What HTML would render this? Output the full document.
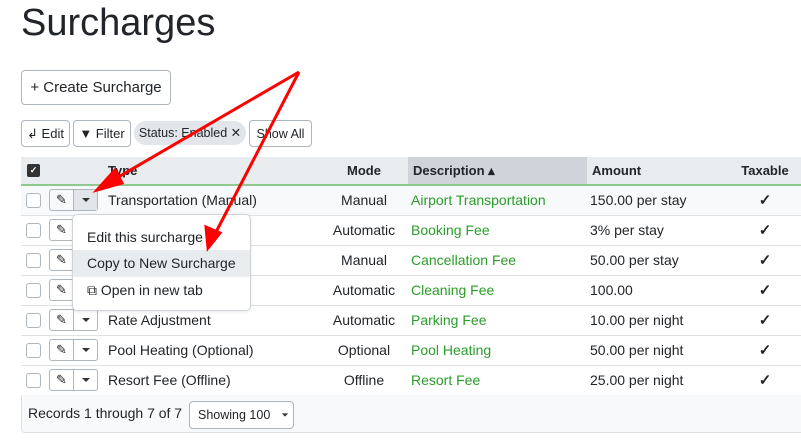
<!DOCTYPE html><html><head><style>
body{margin:0;width:801px;height:443px;overflow:hidden;background:#fff;font-family:"Liberation Sans",sans-serif;color:#212529;position:relative}
.a{position:absolute}
h1{position:absolute;left:21px;top:2px;margin:0;font-size:38px;font-weight:400}
.btn{position:absolute;border:1px solid #adb5bd;border-radius:4px;background:#fff;box-sizing:border-box;font-size:13px;display:flex;align-items:center;justify-content:center}
table{position:absolute;left:21px;top:157px;border-collapse:collapse;font-size:14px;table-layout:fixed;width:789px}
td,th{height:30px;padding:0;border-bottom:1px solid #dee2e6;box-sizing:border-box;white-space:nowrap}
th{background:#e9ecef;font-size:13px;text-align:left;height:28px;border-bottom:2px solid #8fc98f}
.cb{width:13px;height:13px;border:1px solid #adb5bd;border-radius:3px;margin-left:5px;background:#fff}
.g{color:#2a9d2a}
.bg{display:flex;margin-left:4px;width:49px;height:22px;border:1px solid #adb5bd;border-radius:3px;box-sizing:border-box}
.bg span{flex:1;display:flex;align-items:center;justify-content:center;font-size:13px;color:#222}
.bg span+span{border-left:1px solid #adb5bd}
.car{width:0;height:0;border-left:4px solid transparent;border-right:4px solid transparent;border-top:4px solid #333}
.ck{text-align:center;font-weight:bold;font-size:15px}
</style></head><body>
<h1>Surcharges</h1>
<div class="btn" style="left:21px;top:70px;width:150px;height:35px;font-size:15px">+ Create Surcharge</div>
<div class="btn" style="left:21px;top:120px;width:49px;height:27px">↲ Edit</div>
<div class="btn" style="left:73px;top:120px;width:58px;height:27px">▼ Filter</div>
<div class="a" style="left:134px;top:121px;width:112px;height:24px;background:#e2e6ea;border-radius:12px;font-size:12.5px;line-height:24px;text-align:center">Status: Enabled ✕</div>
<div class="btn" style="left:249px;top:120px;width:63px;height:27px;font-size:12.5px">Show All</div>
<table>
<colgroup><col style="width:24px"><col style="width:63px"><col style="width:212px"><col style="width:88px"><col style="width:179px"><col style="width:133px"><col style="width:90px"></colgroup>
<tr><th><div style="width:13px;height:13px;background:#333;border-radius:2px;margin-left:6px;color:#fff;font-size:9px;text-align:center;line-height:13px">✓</div></th><th></th><th>Type</th><th style="text-align:center">Mode</th><th style="background:#ced4da;padding-left:5px">Description ▴</th><th style="padding-left:5px">Amount</th><th style="text-align:center">Taxable</th></tr>
<tr style="background:#f8f9fa"><td><div class="cb"></div></td><td><div class="bg"><span>✎</span><span style="background:#e2e6ea"><i class="car"></i></span></div></td><td>Transportation (Manual)</td><td style="text-align:center">Manual</td><td class="g" style="padding-left:3px">Airport Transportation</td><td style="padding-left:3px">150.00 per stay</td><td class="ck">✓</td></tr>
<tr><td><div class="cb"></div></td><td><div class="bg"><span>✎</span><span><i class="car"></i></span></div></td><td>Booking Fee (Custom)</td><td style="text-align:center">Automatic</td><td class="g" style="padding-left:3px">Booking Fee</td><td style="padding-left:3px">3% per stay</td><td class="ck">✓</td></tr>
<tr><td><div class="cb"></div></td><td><div class="bg"><span>✎</span><span><i class="car"></i></span></div></td><td>Cancellation (Manual)</td><td style="text-align:center">Manual</td><td class="g" style="padding-left:3px">Cancellation Fee</td><td style="padding-left:3px">50.00 per stay</td><td class="ck">✓</td></tr>
<tr><td><div class="cb"></div></td><td><div class="bg"><span>✎</span><span><i class="car"></i></span></div></td><td>Cleaning</td><td style="text-align:center">Automatic</td><td class="g" style="padding-left:3px">Cleaning Fee</td><td style="padding-left:3px">100.00</td><td class="ck">✓</td></tr>
<tr><td><div class="cb"></div></td><td><div class="bg"><span>✎</span><span><i class="car"></i></span></div></td><td>Rate Adjustment</td><td style="text-align:center">Automatic</td><td class="g" style="padding-left:3px">Parking Fee</td><td style="padding-left:3px">10.00 per night</td><td class="ck">✓</td></tr>
<tr><td><div class="cb"></div></td><td><div class="bg"><span>✎</span><span><i class="car"></i></span></div></td><td>Pool Heating (Optional)</td><td style="text-align:center">Optional</td><td class="g" style="padding-left:3px">Pool Heating</td><td style="padding-left:3px">50.00 per night</td><td class="ck">✓</td></tr>
<tr><td><div class="cb"></div></td><td><div class="bg"><span>✎</span><span><i class="car"></i></span></div></td><td>Resort Fee (Offline)</td><td style="text-align:center">Offline</td><td class="g" style="padding-left:3px">Resort Fee</td><td style="padding-left:3px">25.00 per night</td><td class="ck">✓</td></tr>
</table>
<div class="a" style="left:21px;top:395px;width:790px;height:38px;background:#f8f9fa;border:1px solid #dee2e6;border-top:none;border-radius:0 0 4px 4px;box-sizing:border-box"></div>
<div class="a" style="left:28px;top:405px;font-size:14px">Records 1 through 7 of 7</div>
<div class="btn" style="left:189px;top:401px;width:105px;height:28px;font-size:12.5px;justify-content:flex-start;padding-left:8px">Showing 100 &nbsp;&nbsp;<i class="car" style="transform:scale(.8)"></i></div>
<div class="a" style="left:72px;top:214px;width:177px;height:95px;background:#fff;border:1px solid #ced4da;border-radius:5px;font-size:14px;box-shadow:0 1px 3px rgba(0,0,0,.1)">
<div style="padding:14px 0 0 14px;height:21px">Edit this surcharge</div>
<div style="background:#e9ecef;height:27px;line-height:27px;padding-left:14px">Copy to New Surcharge</div>
<div style="padding:5px 0 0 14px">⧉ Open in new tab</div></div>
<svg class="a" style="left:0;top:0" width="801" height="443"><g stroke="#f00" stroke-width="3" fill="#f00"><line x1="299" y1="72" x2="108" y2="183"/><polygon points="97,190 115,170 122,183"/><line x1="299" y1="72" x2="215" y2="234"/><polygon points="208,248 206,227 220,233"/></g></svg>
</body></html>
